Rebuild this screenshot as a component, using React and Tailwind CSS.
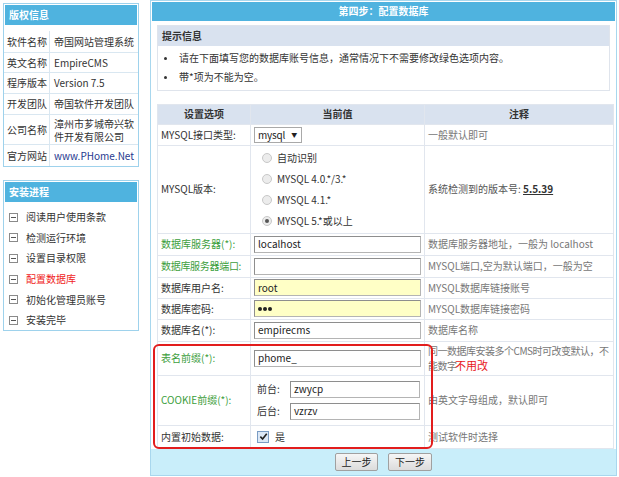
import React from "react";

const Minus = () => (
  <span className="inline-flex shrink-0 w-[9px] h-[9px] border border-[#8a8a8a] items-center justify-center mr-[8px] bg-white">
    <span className="block w-[5px] h-px bg-[#555]" />
  </span>
);

const Radio = ({ checked, children }) => (
  <div className="flex items-center h-[21px] pl-[8px]">
    <span className="w-[10px] h-[10px] rounded-full border border-[#c8c8c8] bg-[#ececec] flex items-center justify-center mr-[5px]">
      {checked ? <span className="w-[4px] h-[4px] rounded-full bg-[#555]" /> : null}
    </span>
    <span>{children}</span>
  </div>
);

const Input = ({ value, yellow, w = "w-[167px]" }) => (
  <div
    className={`${w} h-[17px] border border-[#b4b4b4] border-t-[#8e8e8e] border-l-[#8e8e8e] flex items-center pl-[3px] text-[#222] ${
      yellow ? "bg-[#ffffc6]" : "bg-white"
    }`}
  >
    {value}
  </div>
);

const Dots = () => (
  <span className="flex gap-[1px]">
    <span className="w-[4px] h-[4px] rounded-full bg-[#222]" />
    <span className="w-[4px] h-[4px] rounded-full bg-[#222]" />
    <span className="w-[4px] h-[4px] rounded-full bg-[#222]" />
  </span>
);

export default function App() {
  const leftRows = [
    ["软件名称", "帝国网站管理系统", "h-[21px]"],
    ["英文名称", "EmpireCMS", "h-[20px]"],
    ["程序版本", "Version 7.5", "h-[21px]"],
    ["开发团队", "帝国软件开发团队", "h-[21px]"],
  ];
  const steps = ["阅读用户使用条款", "检测运行环境", "设置目录权限", "配置数据库", "初始化管理员账号", "安装完毕"];
  const td = "border border-[#e1e6ee] px-[3px] whitespace-nowrap overflow-visible";
  return (
    <div className="w-[619px] h-[477px] bg-white overflow-hidden relative font-['Noto_Sans_CJK_SC','Noto_Sans',sans-serif] text-[10px] leading-[14px] text-[#333]">
      <div className="flex items-start">
        {/* left column */}
        <div className="w-[136px] shrink-0 ml-[3px] mt-[3px] flex flex-col">
          <div className="border border-[#9ed2ec] bg-white h-[164px]">
            <div className="h-[20px] bg-[#4fb3df] text-white font-bold flex items-center pl-[4px] m-px mb-[6px]">版权信息</div>
            {leftRows.map(([a, b, h], i) => (
              <div key={a} className={`flex ${h} ${i === 0 ? "" : "border-t"} border-[#d9e7f1]`}>
                <div className="w-[46px] shrink-0 flex items-center pl-[3px] border-r border-[#d9e7f1] whitespace-nowrap">{a}</div>
                <div className="flex-1 flex items-center pl-[4px] whitespace-nowrap">{b}</div>
              </div>
            ))}
            <div className="flex h-[30px] border-t border-[#d9e7f1]">
              <div className="w-[46px] shrink-0 flex items-center pl-[3px] border-r border-[#d9e7f1] whitespace-nowrap">公司名称</div>
              <div className="flex-1 flex items-center pl-[4px] pr-[4px] leading-[13px]">漳州市芗城帝兴软件开发有限公司</div>
            </div>
            <div className="flex h-[22px] border-t border-[#d9e7f1]">
              <div className="w-[46px] shrink-0 flex items-center pl-[3px] border-r border-[#d9e7f1] whitespace-nowrap">官方网站</div>
              <div className="flex-1 flex items-center pl-[4px] text-[#1f3a8f] whitespace-nowrap">www.PHome.Net</div>
            </div>
          </div>

          <div className="border border-[#9ed2ec] bg-white mt-[13px] h-[151px]">
            <div className="h-[20px] bg-[#4fb3df] text-white font-bold flex items-center pl-[4px] m-px">安装进程</div>
            <div className="pt-[4px] pl-[5px]">
              {steps.map((s) => (
                <div key={s} className={`flex items-center h-[20.6px] ${s === "配置数据库" ? "text-[#f01c1c]" : ""}`}>
                  <Minus />
                  <span>{s}</span>
                </div>
              ))}
            </div>
          </div>
        </div>

        {/* right panel */}
        <div className="ml-[11px] w-[467px] h-[476px] border border-[#a8d7ee] flex flex-col">
          <div className="h-[20px] mt-px mx-px bg-[#4fb3df] text-white font-bold flex items-center justify-center">第四步：配置数据库</div>
          <div className="px-[6px]">
            <div className="mt-[4px] border border-[#dfe4ec]">
              <div className="h-[20px] bg-[#d9e2ef] font-bold flex items-center pl-[4px]">提示信息</div>
              <div className="py-[3px]">
                <div className="flex items-center h-[19px] pl-[6px]">
                  <span className="w-[3px] h-[3px] rounded-full bg-[#333] mr-[12px]" />
                  请在下面填写您的数据库账号信息，通常情况下不需要修改绿色选项内容。
                </div>
                <div className="flex items-center h-[19px] pl-[6px]">
                  <span className="w-[3px] h-[3px] rounded-full bg-[#333] mr-[12px]" />
                  带*项为不能为空。
                </div>
              </div>
            </div>

            <table className="mt-[13px] w-[456px] border-collapse table-fixed">
              <colgroup>
                <col className="w-[93px]" />
                <col className="w-[174px]" />
                <col className="w-[189px]" />
              </colgroup>
              <tbody>
                <tr className="h-[20px] bg-[#d9e2ef] font-bold">
                  <td className={`${td} text-center`}>设置选项</td>
                  <td className={`${td} text-center`}>当前值</td>
                  <td className={`${td} text-center`}>注释</td>
                </tr>
                <tr className="h-[21px]">
                  <td className={td}>MYSQL接口类型:</td>
                  <td className={td}>
                    <div className="w-[48px] h-[16px] border border-[#a9a9a9] flex items-center pl-[3px] text-[#222]">
                      <span className="tracking-[-0.2px]">mysql</span>
                      <span className="text-[6px] ml-[6px]">▼</span>
                    </div>
                  </td>
                  <td className={`${td} text-[#777]`}>一般默认即可</td>
                </tr>
                <tr className="h-[88px]">
                  <td className={td}>MYSQL版本:</td>
                  <td className={td}>
                    <Radio>自动识别</Radio>
                    <Radio>MYSQL 4.0.*/3.*</Radio>
                    <Radio>MYSQL 4.1.*</Radio>
                    <Radio checked>MYSQL 5.*或以上</Radio>
                  </td>
                  <td className={`${td} text-[#555]`}>
                    系统检测到的版本号: <b className="underline text-[#333]">5.5.39</b>
                  </td>
                </tr>
                <tr className="h-[22px]">
                  <td className={`${td} text-[#3c9e3c]`}>数据库服务器(*):</td>
                  <td className={td}><Input value="localhost" /></td>
                  <td className={`${td} text-[#777]`}>数据库服务器地址，一般为 localhost</td>
                </tr>
                <tr className="h-[22px]">
                  <td className={`${td} text-[#3c9e3c] tracking-[-0.3px]`}>数据库服务器端口:</td>
                  <td className={td}><Input value="" /></td>
                  <td className={`${td} text-[#777]`}>MYSQL端口,空为默认端口，一般为空</td>
                </tr>
                <tr className="h-[21px]">
                  <td className={td}>数据库用户名:</td>
                  <td className={td}><Input value="root" yellow /></td>
                  <td className={`${td} text-[#777]`}>MYSQL数据库链接账号</td>
                </tr>
                <tr className="h-[21px]">
                  <td className={td}>数据库密码:</td>
                  <td className={td}><Input value={<Dots />} yellow /></td>
                  <td className={`${td} text-[#777]`}>MYSQL数据库链接密码</td>
                </tr>
                <tr className="h-[22px]">
                  <td className={td}>数据库名(*):</td>
                  <td className={td}><Input value="empirecms" /></td>
                  <td className={`${td} text-[#777]`}>数据库名称</td>
                </tr>
                <tr className="h-[34px]">
                  <td className={`${td} text-[#3c9e3c]`}>表名前缀(*):</td>
                  <td className={td}><Input value="phome_" /></td>
                  <td className={`${td} text-[#777] leading-[15px] tracking-[-0.5px]`}>
                    同一数据库安装多个CMS时可改变默认，不
                    <br />
                    能数字
                  </td>
                </tr>
                <tr className="h-[50px]">
                  <td className={`${td} text-[#3c9e3c]`}>COOKIE前缀(*):</td>
                  <td className={td}>
                    <div className="flex items-center h-[22px] pl-[3px]">
                      <span className="w-[33px]">前台:</span>
                      <Input value="zwycp" w="w-[130px]" />
                    </div>
                    <div className="flex items-center h-[22px] pl-[3px]">
                      <span className="w-[33px]">后台:</span>
                      <Input value="vzrzv" w="w-[130px]" />
                    </div>
                  </td>
                  <td className={`${td} text-[#777]`}>由英文字母组成，默认即可</td>
                </tr>
                <tr className="h-[23px]">
                  <td className={td}>内置初始数据:</td>
                  <td className={td}>
                    <div className="flex items-center pl-[3px]">
                      <span className="w-[12px] h-[12px] border border-[#7a9cc4] bg-[#dce8f6] flex items-center justify-center mr-[6px]">
                        <svg width="9" height="9" viewBox="0 0 10 10">
                          <path d="M1.5 5.2 L4 7.8 L8.6 2" stroke="#222" strokeWidth="1.8" fill="none" />
                        </svg>
                      </span>
                      <span>是</span>
                    </div>
                  </td>
                  <td className={`${td} text-[#777]`}>测试软件时选择</td>
                </tr>
              </tbody>
            </table>
          </div>
          <div className="h-[28px] bg-[#c9eefa] flex items-center justify-center gap-[10px] mt-auto">
            <button className="w-[43px] h-[18px] border border-[#a0a0a0] rounded-[2px] bg-gradient-to-b from-[#f6f6f6] to-[#dcdcdc] text-[10px] leading-[14px] text-[#222]">上一步</button>
            <button className="w-[44px] h-[18px] border border-[#a0a0a0] rounded-[2px] bg-gradient-to-b from-[#f6f6f6] to-[#dcdcdc] text-[10px] leading-[14px] text-[#222]">下一步</button>
          </div>
        </div>
      </div>

      {/* annotations */}
      <div className="absolute left-[153px] top-[344px] w-[280px] h-[105px] border-2 border-[#e21d1d] rounded-[6px] pointer-events-none" />
      <div className="absolute left-[455px] top-[358px] text-[11px] leading-[14px] text-[#e8201c]">不用改</div>
    </div>
  );
}
